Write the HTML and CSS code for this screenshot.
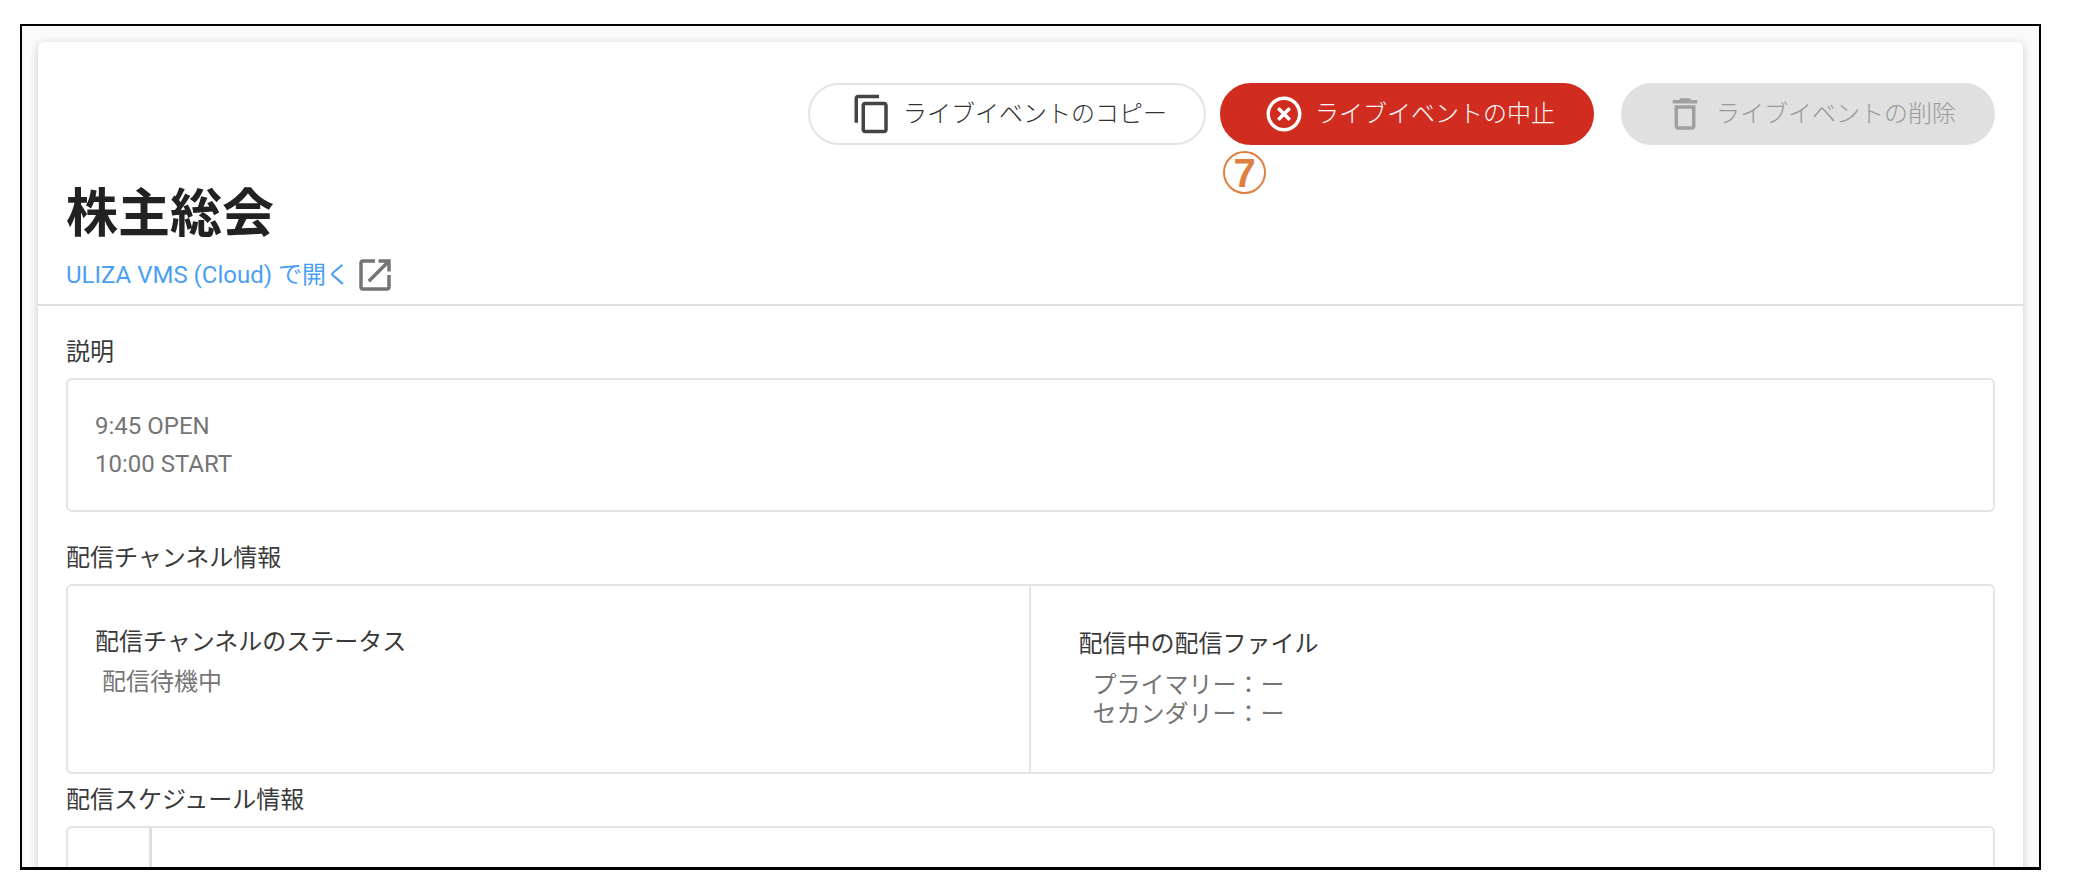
FILE: index.html
```
<!DOCTYPE html>
<html lang="ja">
<head>
    <meta charset="UTF-8">
    <meta name="viewport" content="width=device-width, initial-scale=1.0">
    <title>株主総会</title>
    <link rel="stylesheet" href="styles.css">
</head>
<body>
    <div class="frame">
        <main class="card">
            <header class="card-header">
                <div class="actions">
                    <button type="button" class="btn">
                        <svg class="icon" viewBox="0 0 24 24"><path d="M16 1H4c-1.1 0-2 .9-2 2v14h2V3h12V1zm3 4H8c-1.1 0-2 .9-2 2v14c0 1.1.9 2 2 2h11c1.1 0 2-.9 2-2V7c0-1.1-.9-2-2-2zm0 16H8V7h11v14z"/></svg>
                        ライブイベントのコピー
                    </button>
                    <div class="cancel">
                        <button type="button" class="btn btn-danger">
                            <svg class="icon" viewBox="0 0 24 24"><path d="M14.59 8L12 10.59 9.41 8 8 9.41 10.59 12 8 14.59 9.41 16 12 13.41 14.59 16 16 14.59 13.41 12 16 9.41 14.59 8zM12 2C6.47 2 2 6.47 2 12s4.47 10 10 10 10-4.47 10-10S17.53 2 12 2zm0 18c-4.41 0-8-3.59-8-8s3.59-8 8-8 8 3.59 8 8-3.59 8-8 8z"/></svg>
                            ライブイベントの中止
                        </button>
                        <span class="marker">7</span>
                    </div>
                    <button type="button" class="btn btn-delete" disabled>
                        <svg class="icon" viewBox="0 0 24 24"><path d="M6 19c0 1.1.9 2 2 2h8c1.1 0 2-.9 2-2V7H6v12zM8 9h8v10H8V9zm7.5-5l-1-1h-5l-1 1H5v2h14V4z"/></svg>
                        ライブイベントの削除
                    </button>
                </div>
                <h1>株主総会</h1>
                <a href="#" class="open-link">
                    ULIZA VMS (Cloud) で開く
                    <svg class="icon" viewBox="0 0 24 24"><path d="M19 19H5V5h7V3H5c-1.11 0-2 .9-2 2v14c0 1.1.89 2 2 2h14c1.1 0 2-.9 2-2v-7h-2v7zM14 3v2h3.59l-9.83 9.83 1.41 1.41L19 6.41V10h2V3h-7z"/></svg>
                </a>
            </header>

            <section class="section">
                <h2>説明</h2>
                <div class="box description">
                    <p>9:45 OPEN</p>
                    <p>10:00 START</p>
                </div>
            </section>

            <section class="section">
                <h2>配信チャンネル情報</h2>
                <div class="box channel">
                    <div class="status">
                        <h3>配信チャンネルのステータス</h3>
                        <p>配信待機中</p>
                    </div>
                    <div class="files">
                        <h3>配信中の配信ファイル</h3>
                        <p>プライマリー：ー</p>
                        <p>セカンダリー：ー</p>
                    </div>
                </div>
            </section>

            <section class="section section-schedule">
                <h2>配信スケジュール情報</h2>
                <div class="box schedule">
                    <div class="schedule-side"></div>
                </div>
            </section>
        </main>
    </div>
</body>
</html>
```
FILE: styles.css
```
* {
    box-sizing: border-box;
}
body {
    font-family: Roboto, "Noto Sans CJK JP", sans-serif;
    font-size: 24px;
    color: #3a3a3a;
    background-color: #fff;
    margin: 0;
    padding: 24px 33px 18px 20px;
    height: 100vh;
}
h1, h2, h3, p {
    margin: 0;
}
.frame {
    height: 100%;
    padding: 16px 16px 0;
    border: 2px solid #000;
    border-bottom-width: 3px;
    background-color: #fafafa;
    overflow: hidden;
}
.card {
    min-height: 100%;
    background-color: #fff;
    border-radius: 6px;
    box-shadow: 0 2px 8px rgba(0, 0, 0, 0.2);
}
.card-header {
    padding: 41px 28px 7px;
    border-bottom: 2px solid #e0e0e0;
}
.actions {
    display: flex;
    justify-content: flex-end;
}
.icon {
    width: 42px;
    height: 42px;
    flex-shrink: 0;
    fill: currentColor;
}
.btn {
    display: flex;
    align-items: center;
    gap: 10px;
    height: 62px;
    padding: 0 37px 0 41px;
    font: inherit;
    font-weight: 300;
    line-height: 36px;
    color: #333;
    background-color: #fff;
    border: 2px solid #e4e4e4;
    border-radius: 31px;
    cursor: pointer;
}
.btn .icon {
    color: #444;
}
.btn-danger {
    color: #fff;
    background-color: #d02c20;
    border-color: #d02c20;
}
.btn-danger .icon {
    color: #fff;
}
.btn-delete {
    color: #999;
    background-color: #e0e0e0;
    border-color: #e0e0e0;
    cursor: default;
}
.btn-delete .icon {
    color: #a0a0a0;
}
.cancel {
    position: relative;
    margin: 0 27px 0 14px;
}
/* step number under the cancel button */
.marker {
    position: absolute;
    top: 68px;
    left: 3px;
    width: 43px;
    height: 43px;
    border: 2px solid #e08040;
    border-radius: 50%;
    font: bold 40px/41px "Liberation Sans", Arial, sans-serif;
    text-align: center;
    color: #e08040;
}
h1 {
    margin-top: 32px;
    font-size: 52px;
    line-height: 76px;
    color: #222;
}
.open-link {
    display: inline-flex;
    align-items: center;
    gap: 4px;
    height: 44px;
    line-height: 36px;
    color: #4a9ff5;
    text-decoration: none;
    vertical-align: top;
}
.open-link .icon {
    color: #757575;
}
.section {
    padding: 28px 28px 0;
}
.section-schedule {
    padding-top: 8px;
}
h2, h3 {
    font-size: 24px;
    font-weight: normal;
    line-height: 36px;
}
.box {
    margin-top: 8px;
    border: 2px solid #e4e4e4;
    border-radius: 6px;
}
.box p {
    color: #757575;
}
.description {
    padding: 27px;
}
.description p {
    line-height: 38px;
}
.channel {
    display: grid;
    grid-template-columns: 1fr 1fr;
    min-height: 190px;
}
.status {
    padding: 38px 27px;
    border-right: 2px solid #e4e4e4;
}
.status p {
    padding: 4px 7px;
    line-height: 36px;
}
.files {
    padding: 40px 48px;
}
.files h3 {
    margin-bottom: 9px;
}
.files p {
    padding-left: 14px;
    line-height: 29px;
}
.schedule {
    display: flex;
    height: 120px;
}
.schedule-side {
    width: 84px;
    border-right: 3px solid #e0e0e0;
}
```
